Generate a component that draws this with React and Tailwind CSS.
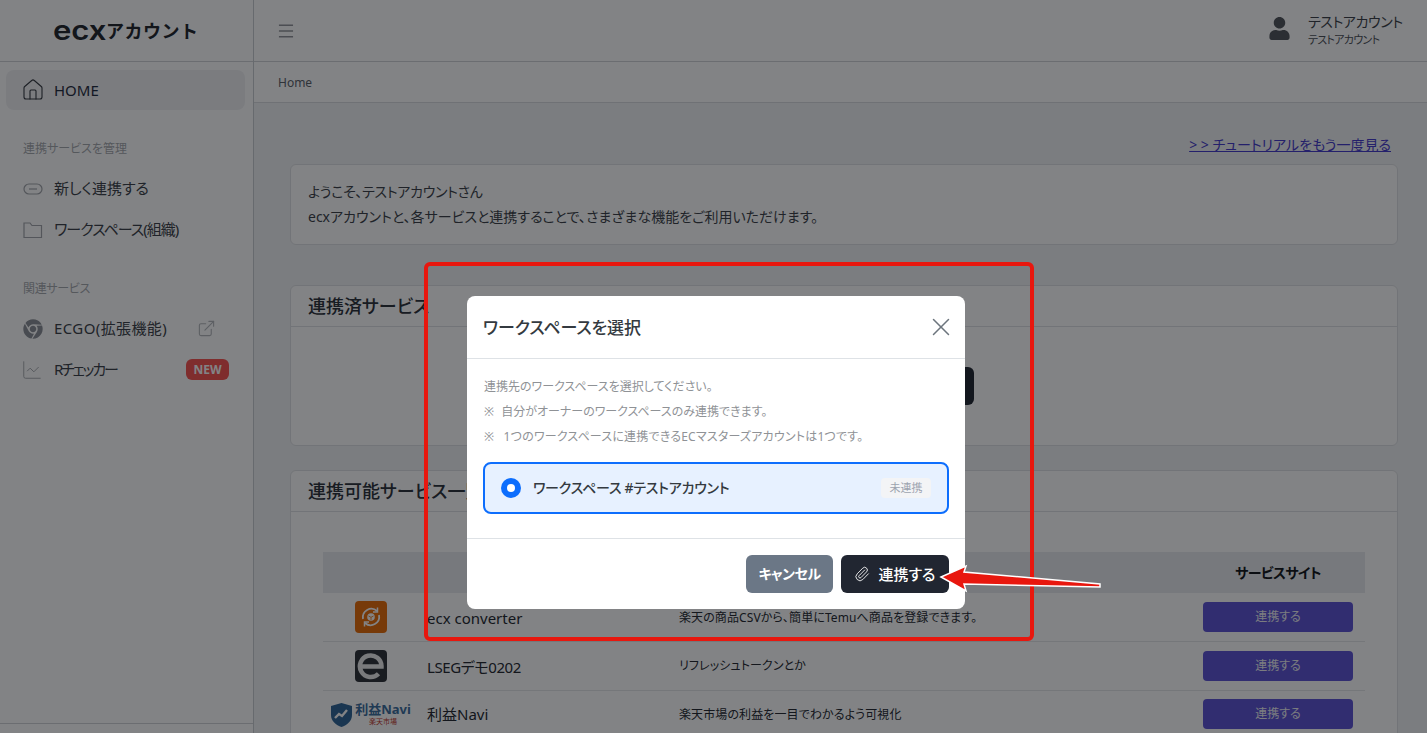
import React from "react";
import { ChartLine, ExternalLink, House, Menu, Paperclip, X } from "lucide-react";
import { FaChrome, FaUser } from "react-icons/fa";

const FONT = "font-['Noto_Sans','Noto_Sans_CJK_JP',sans-serif] [font-feature-settings:'palt']";

const SERVICES = [
  { name: "ecx converter", desc: "楽天の商品CSVから、簡単にTemuへ商品を登録できます。", logo: "converter", h: "h-[49px]", nameClass: "pt-[2px]", descClass: "pt-[2px]", btn: "" },
  { name: "LSEGデモ0202", desc: "リフレッシュトークンとか", logo: "e", h: "h-[49px]", nameClass: "pt-[2px] tracking-[-0.4px]", descClass: "", btn: "" },
  { name: "利益Navi", desc: "楽天市場の利益を一目でわかるよう可視化", logo: "navi", h: "h-[48px]", nameClass: "", descClass: "", btn: "-mt-[2px]" },
];

const LinkIcon = () => (
  <svg width="20" height="20" viewBox="0 0 20 20" fill="none" stroke="currentColor" strokeWidth="1.2">
    <rect x="1" y="5" width="18" height="10" rx="5" />
    <path d="M6 10h8" />
  </svg>
);

const FolderIcon = () => (
  <svg width="20" height="20" viewBox="0 0 20 20" fill="none" stroke="currentColor" strokeWidth="1.2">
    <path d="M1 3h6l2 2.5h9.500v12H1z" />
  </svg>
);

const ServiceLogo = ({ type }) => {
  if (type === "converter") {
    return (
      <div className="w-8 h-8 rounded bg-[#e96c06] flex items-center justify-center">
        <svg width="24" height="24" viewBox="0 0 24 24" fill="none" stroke="#fff" strokeWidth="1.8">
          <path d="M4 14a8.500 8.500 0 0 1 14-8" />
          <path d="M20 10a8.500 8.500 0 0 1-14 8" />
          <path d="M18.500 2.500V7H14M5.500 21.500V17H10" strokeWidth="1.5" />
          <circle cx="12" cy="12" r="3.800" fill="#fff" stroke="none" />
          <path d="M9.500 11l2.500 1.300 2.500-1.300M12 12.300V15" stroke="#e96c06" strokeWidth="0.8" />
        </svg>
      </div>
    );
  }
  if (type === "e") {
    return (
      <div className="w-8 h-8 rounded bg-[#2d3036] flex items-center justify-center">
        <svg width="28" height="28" viewBox="0 0 28 28" fill="none" stroke="#eceded" strokeWidth="4.500">
          <path d="M3 14.500h21.500a10.800 10.800 0 1 0-3 7.200" />
        </svg>
      </div>
    );
  }
  return (
    <div className="flex items-center gap-[3px]">
      <svg width="21" height="24" viewBox="0 0 21 24">
        <path d="M10.500 0 21 3v9c0 6-5 10-10.500 12C5 22 0 18 0 12V3z" fill="#2e6496" />
        <path d="M4 15l4-4 3 2 5-6" fill="none" stroke="#fff" strokeWidth="2.400" />
      </svg>
      <div className="flex flex-col items-center">
        <span className="text-[13px] leading-[13px] font-bold text-[#3a6c9c] whitespace-nowrap">利益Navi</span>
        <span className="text-[7px] leading-[9px] mt-px text-[#c0392b] whitespace-nowrap">楽天市場</span>
      </div>
    </div>
  );
};

const SideItem = ({ icon, label, labelClass, right }) => (
  <div className="flex items-center h-[41px] pl-[23px]">
    <span className="w-[31px] text-[#a2a5aa] flex items-center">{icon}</span>
    <span className={`text-[15px] text-[#3a3f47] flex-1 ${labelClass || ""}`}>{label}</span>
    {right}
  </div>
);

const Sidebar = () => (
  <aside className="w-[254px] shrink-0 h-full bg-white border-r border-[#c9ccd0] flex flex-col">
    <div className="h-[62px] shrink-0 border-b border-[#d0d3d6] flex items-center pl-[53px]">
      <span className="inline-block w-[53px] origin-left scale-x-[1.15] text-[27px] leading-none font-semibold text-[#20242b] font-['Inter',sans-serif]">ecx</span>
      <span className="text-lg font-bold text-[#20242b] tracking-[0.5px] [font-feature-settings:normal]">アカウント</span>
    </div>
    <div className="flex-1 pt-2">
      <div className="ml-[6px] mr-2 h-10 rounded-lg bg-[#f0f1f3] flex items-center pl-[15px]">
        <House size={24} strokeWidth={1.1} className="text-[#34383f] mr-[9px]" />
        <span className="text-[15px] text-[#1f2a3c]">HOME</span>
      </div>
      <div className="text-xs text-[#a5a8ad] pl-[23px] mt-[30px] mb-[10px] leading-[18px]">連携サービスを管理</div>
      <SideItem icon={<LinkIcon />} label="新しく連携する" />
      <SideItem icon={<FolderIcon />} label="ワークスペース(組織)" labelClass="tracking-[-1px]" />
      <div className="text-xs text-[#a5a8ad] pl-[23px] mt-[30px] mb-[10px] leading-[18px] tracking-[-0.3px]">関連サービス</div>
      <SideItem
        icon={<FaChrome size={20} className="text-[#8b8f96]" />}
        label="ECGO(拡張機能)"
        labelClass="tracking-[0.4px]"
        right={<ExternalLink size={19} strokeWidth={1.4} className="text-[#b4b7bb] mr-[37px]" />}
      />
      <SideItem
        icon={<ChartLine size={22} strokeWidth={1} className="-ml-[2px]" />}
        label="Rチェッカー"
        labelClass="tracking-[-2.200px]"
        right={
          <span className="mr-6 w-[43px] h-[21px] rounded-md bg-[#f9524f] text-white text-xs font-bold flex items-center justify-center">
            NEW
          </span>
        }
      />
    </div>
    <div className="h-[10px] shrink-0 border-t border-[#d0d3d6]" />
  </aside>
);

const Card = ({ title, bodyClass, children }) => (
  <section className="bg-white border border-[#dfe1e4] rounded-md">
    <div className="h-[41px] border-b border-[#dfe1e4] flex items-center pl-[17px] text-lg font-medium text-[#2b3038]">{title}</div>
    <div className={bodyClass}>{children}</div>
  </section>
);

const Main = () => (
  <div className="flex-1 h-full flex flex-col min-w-0">
    <header className="h-[62px] shrink-0 bg-white border-b border-[#d0d3d6] flex items-center justify-between pl-[23px] pr-[24px]">
      <Menu size={20} strokeWidth={1.1} className="text-[#4a4f57] -ml-[1px]" />
      <div className="flex items-center">
        <FaUser size={23} className="text-[#50545a] mr-[17px] -mt-[5px]" />
        <div className="flex flex-col w-[95px] -mt-[1px]">
          <span className="text-sm leading-[19px] text-[#3a3f47] tracking-[-0.4px] whitespace-nowrap">テストアカウント</span>
          <span className="text-[11px] leading-[17px] text-[#4a4e55] tracking-[-0.7px] whitespace-nowrap">テストアカウント</span>
        </div>
      </div>
    </header>
    <div className="h-[41px] shrink-0 bg-white border-b border-[#d9dbde] flex items-center pl-[24px] pt-px text-xs text-[#5a6068]">Home</div>
    <main className="flex-1 min-h-0 bg-[#f1f2f4] pl-9 pr-[29px] pt-[32px]">
      <div className="flex justify-end pr-[7px] h-[29px]">
        <a className="text-sm leading-5 text-[#4338ca] underline">&gt; &gt; チュートリアルをもう一度見る</a>
      </div>
      <div className="h-[81px] bg-white border border-[#dfe1e4] rounded-md pl-[17px] pt-[14px] text-sm leading-[25px] text-[#3a3f47]">
        <p className="tracking-[-0.3px]">ようこそ、テストアカウントさん</p>
        <p>ecxアカウントと、各サービスと連携することで、さまざまな機能をご利用いただけます。</p>
      </div>
      <div className="mt-10">
        <Card title="連携済サービス" bodyClass="h-[118px] flex justify-center pt-[40px]">
          <button className="w-[260px] h-[38px] rounded-md bg-[#212631] text-white text-sm" />
        </Card>
      </div>
      <div className="mt-6">
        <Card title="連携可能サービス一覧" bodyClass="px-8 pt-10">
          <div className="grid grid-cols-[96px_252px_520px_174px] h-[41px] bg-[#e8ebee] items-center text-sm font-semibold text-[#111418]">
            <span />
            <span />
            <span />
            <span className="text-center tracking-[-0.7px]">サービスサイト</span>
          </div>
          {SERVICES.map((s) => (
            <div key={s.name} className={`grid grid-cols-[96px_252px_520px_174px] ${s.h} items-center border-b border-[#e4e6e9]`}>
              <div className="flex justify-center"><ServiceLogo type={s.logo} /></div>
              <span className={`pl-2 text-[15px] text-[#23272e] ${s.nameClass}`}>{s.name}</span>
              <span className={`pl-2 text-xs text-[#23272e] tracking-[0.1px] ${s.descClass}`}>{s.desc}</span>
              <div className="flex justify-center">
                <button className={`w-[150px] h-[30px] rounded bg-[#5c52d4] text-[#f1f1f5] text-xs ${s.btn}`}>連携する</button>
              </div>
            </div>
          ))}
        </Card>
      </div>
    </main>
  </div>
);

const WorkspaceModal = () => (
  <div className="absolute left-[467px] top-[296px] w-[498px] h-[313px] bg-white rounded-lg flex flex-col">
    <div className="h-[63px] shrink-0 border-b border-[#dee2e6] flex items-center justify-between pl-4 pr-[9px]">
      <h2 className="text-[17px] pt-[2px] font-medium text-[#343a40] tracking-[-0.1px]">ワークスペースを選択</h2>
      <X size={30} strokeWidth={1.2} className="text-[#6c757d]" />
    </div>
    <div className="h-[180px] shrink-0 border-b border-[#dee2e6] px-4 pt-[15px]">
      <div className="pl-px text-xs leading-[25px] text-[#8f9296]">
        <p>連携先のワークスペースを選択してください。</p>
        <p><span className="mr-[4px]">※</span> 自分がオーナーのワークスペースのみ連携できます。</p>
        <p className="tracking-[0.2px]"><span className="mr-[6px]">※</span> 1つのワークスペースに連携できるECマスターズアカウントは1つです。</p>
      </div>
      <div className="mt-[13px] h-[52px] rounded-lg border-2 border-[#0d6efd] bg-[#e7f1ff] flex items-center pl-[16px] pr-4">
        <span className="w-5 h-5 rounded-full bg-[#0d6efd] flex items-center justify-center mr-3">
          <span className="w-2 h-2 rounded-full bg-white" />
        </span>
        <span className="text-sm font-medium text-[#343a40] flex-1 tracking-[-0.25px]">ワークスペース #テストアカウント</span>
        <span className="w-[50px] h-5 rounded bg-[#f3f4f6] text-[11px] text-[#9ca3af] flex items-center justify-center">未連携</span>
      </div>
    </div>
    <div className="flex-1 flex justify-end gap-2 pt-4 pr-4">
      <button className="w-[87px] h-[38px] rounded-md bg-[#6b7786] text-white text-sm font-bold tracking-[-0.5px]">キャンセル</button>
      <button className="w-[108px] h-[38px] rounded-md bg-[#212631] text-white text-[15px] font-medium flex items-center justify-center gap-[8px]">
        <Paperclip size={16} strokeWidth={1.3} />
        連携する
      </button>
    </div>
  </div>
);

const Arrow = () => (
  <svg className="absolute left-[930px] top-[560px]" width="180" height="40" viewBox="930 560 180 40">
    <path
      d="M941 577 966 566 964 572 1100 584 1100 587 964 584 966 591Z"
      fill="#e8170e"
      stroke="#fff"
      strokeWidth="1.500"
    />
  </svg>
);

export default function App() {
  return (
    <div className={`relative w-full h-screen overflow-hidden ${FONT}`}>
      <div className="flex h-full">
        <Sidebar />
        <Main />
      </div>
      <div className="absolute inset-0 bg-[#06080c]/50" />
      <WorkspaceModal />
      <div className="absolute left-[424px] top-[262px] w-[610px] h-[379px] border-[4px] border-[#e8170e] rounded-md" />
      <Arrow />
    </div>
  );
}
